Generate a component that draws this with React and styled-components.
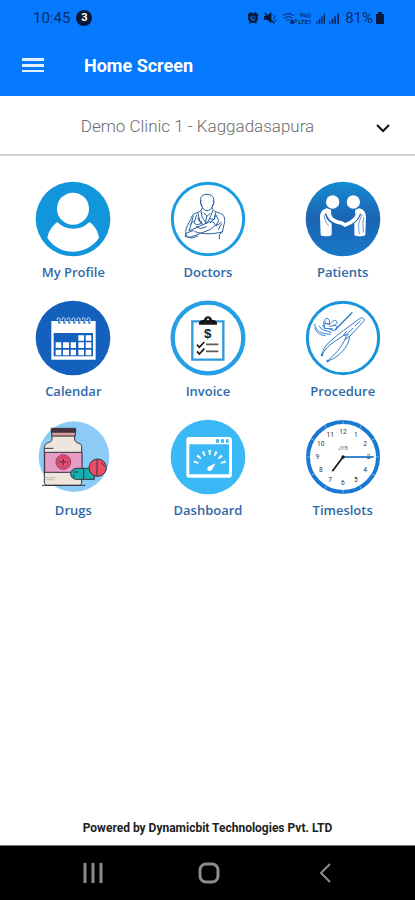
import React, { useState } from "react";
import styled, { createGlobalStyle } from "styled-components";

const GlobalStyle = createGlobalStyle`
  * {
    box-sizing: border-box;
  }
  body {
    margin: 0;
    background: #ffffff;
    font-family: Roboto, "Liberation Sans", sans-serif;
  }
`;

const Screen = styled.div`
  display: flex;
  flex-direction: column;
  min-height: 100vh;
`;

const Header = styled.header`
  background: #057afe;
  color: #ffffff;
`;

const StatusBar = styled.div`
  display: flex;
  align-items: center;
  height: 35px;
  padding: 0 31px 0 33px;
  color: #052c66;
  font-size: 15px;
`;

const Badge = styled.span`
  display: flex;
  align-items: center;
  justify-content: center;
  width: 16px;
  height: 16px;
  margin-left: 6px;
  border-radius: 50%;
  background: #07183a;
  color: #ffffff;
  font-size: 11px;
  font-weight: 700;
`;

const StatusIcons = styled.div`
  display: flex;
  align-items: center;
  gap: 3px;
  margin-left: auto;
`;

const TitleBar = styled.div`
  display: flex;
  align-items: center;
  height: 61px;
  padding: 0 20px;
`;

const MenuButton = styled.button`
  display: flex;
  padding: 0;
  border: 0;
  background: none;
  color: inherit;
  cursor: pointer;
`;

const Title = styled.h1`
  margin: 0 0 0 39px;
  font-size: 18px;
  font-weight: 700;
  line-height: 24px;
`;

const ClinicPicker = styled.div`
  display: grid;
  align-items: center;
  height: 60px;
  border-bottom: 2px solid #d2d2d2;

  > * {
    grid-area: 1 / 1;
  }
  svg {
    justify-self: end;
    margin: 6px 25px 0 0;
    pointer-events: none;
  }
`;

const ClinicSelect = styled.select`
  width: 100%;
  height: 100%;
  padding: 2px 36px 0 16px;
  border: 0;
  appearance: none;
  background: none;
  color: #6c6c6c;
  font-family: inherit;
  font-size: 17px;
  font-weight: 300;
  text-align: center;
  text-align-last: center;
`;

const Menu = styled.nav`
  display: grid;
  grid-template-columns: repeat(3, 1fr);
  row-gap: 19px;
  padding: 25px 5px 0 6px;
`;

const Tile = styled.a`
  display: flex;
  flex-direction: column;
  align-items: center;
  gap: 6px;
  color: #2f69a8;
  font-family: "Open Sans", "Noto Sans", sans-serif;
  font-size: 13px;
  font-weight: 600;
  line-height: 18px;
  text-decoration: none;
`;

const Footer = styled.footer`
  margin-top: auto;
  padding-bottom: 8px;
  color: #222222;
  font-size: 12px;
  font-weight: 700;
  line-height: 18px;
  text-align: center;
`;

const SystemNav = styled.div`
  display: grid;
  grid-template-columns: repeat(3, 1fr);
  align-items: center;
  height: 55px;
  padding: 0 32px 0 35px;
  background: #000000;
  border-top: 1px solid #777777;
`;

const SystemButton = styled.button`
  display: flex;
  justify-content: center;
  padding: 0;
  border: 0;
  background: none;
  color: #8c8c8c;
  cursor: pointer;
`;

const SignalIcons = () => (
  <svg width="95" height="14" viewBox="120 30 285 42" fill="#06275c" aria-hidden="true">
    <g fill="#07183a">
      <circle cx="138" cy="51" r="15" />
      <path d="M121 42l10-9 5 4-11 9zM155 42l-10-9-5 4 11 9zM127 61l6 4-5 4zM149 61l-6 4 5 4z" />
      <path d="M171 44h9l13-11v34l-13-11h-9z" />
    </g>
    <circle cx="138" cy="51" r="8" fill="#0a62c9" />
    <path d="M138 43v9h7" stroke="#07183a" strokeWidth="4" fill="none" />
    <path d="M173 35l29 32" stroke="#07183a" strokeWidth="4" />
    <path
      d="M199 42l6 5-5 5 6 6-5 7M227 44q17-12 34 0M232 51q12-9 24 0M238 58q6-5 12 0"
      stroke="#06275c"
      strokeWidth="3"
      fill="none"
    />
    <path d="M250 60l6-5 6 5v8h-12zM263 55h7l-3 12z" />
    <text x="278" y="48" fontSize="18" fontFamily="Roboto, sans-serif" fontWeight="700">Vo))</text>
    <text x="274" y="68" fontSize="18" fontFamily="Roboto, sans-serif" fontWeight="700">LTE1</text>
    <path d="M328 61h4v7h-4zM335 54h5v14h-5zM343 46h4v22h-4zM350 38h4v30h-4z" />
    <path d="M366 61h4v7h-4zM374 54h5v14h-5zM382 46h5v22h-5zM391 38h5v30h-5z" />
  </svg>
);

const BatteryIcon = () => (
  <svg width="8" height="12" viewBox="0 0 8 12" aria-hidden="true">
    <path d="M2 0h4v2h2v10H0V2h2z" fill="#07183a" />
  </svg>
);

const HamburgerIcon = () => (
  <svg width="25" height="18" viewBox="0 0 25 18" fill="#e6f1ff" aria-hidden="true">
    <path d="M2 1h22v3H2zM2 7h22v3H2zM2 13h22v2H2z" />
  </svg>
);

const ChevronIcon = () => (
  <svg width="14" height="10" viewBox="0 0 14 10" aria-hidden="true">
    <path d="M1 2l6 6 6-6" fill="none" stroke="#111111" strokeWidth="2" />
  </svg>
);

const ProfileIcon = () => (
  <svg width="76" height="76" viewBox="31 32 228 228" aria-hidden="true">
    <circle cx="145" cy="146" r="112" fill="#1296db" />
    <path d="M98 155c-16 12-26 27-30 48 20 29 47 41 77 41s58-14 78-41c-3-20-12-36-29-48-12 13-29 20-48 20s-36-7-48-20z" fill="#fff" />
    <circle cx="145" cy="115" r="48" fill="#fff" />
  </svg>
);

const DoctorIcon = () => (
  <svg width="76" height="76" viewBox="31 32 228 228" fill="none" aria-hidden="true">
    <circle cx="145" cy="146" r="107" stroke="#1b9ce0" strokeWidth="9" />
    <g stroke="#2c5f9f" strokeWidth="3" strokeLinejoin="round" strokeLinecap="round">
      <path d="M126 106c-8-19-4-34 16-34s25 16 17 35c-4 10-10 14-17 14s-13-5-16-15zM125 92c-5 0-3 12 2 14M160 92c5 0 3 12-2 14" />
      <path d="M128 112c-2 8-5 10-13 14-14 4-19 9-22 22-7 12-14 24-15 35-2 12 9 19 20 20l16-6M157 112c2 8 6 11 16 14 16 4 23 10 22 28l-7 31-9 8v13" />
      <path d="M101 137l-7 26-6 18 13-5 51-23 10 3 5 8-12 12-45 18-22 8-12-4 4-10 21-7" />
      <path d="M124 122l4 20 13 18 10-18 8-20M115 128l4 21 11 14M168 127l-4 17-12 13M133 128l9 10 9-9M141 139l-4 21" />
      <path d="M111 135l-8 23 8 5 14-3-10-17M169 134l8 17-9 16 17-10M119 145c-4 5 1 13 7 8M151 145l13 3 3-12" />
      <path d="M106 184c27 9 50 8 82 1M110 168l12 7 18-6M176 177l9-15M91 163l11-11" />
    </g>
  </svg>
);

const PatientsIcon = () => (
  <svg width="76" height="76" viewBox="35 32 228 228" aria-hidden="true">
    <defs>
      <linearGradient id="patients" x1="0" y1="0" x2="0" y2="1">
        <stop offset="0" stopColor="#168bd2" />
        <stop offset="0.5" stopColor="#1c64b4" />
        <stop offset="1" stopColor="#1679c8" />
      </linearGradient>
    </defs>
    <circle cx="149" cy="146" r="112" fill="url(#patients)" />
    <g fill="#fff">
      <circle cx="118" cy="95" r="20" />
      <circle cx="180" cy="95" r="20" />
      <path d="M101 114c-15 3-21 13-21 28l2 51c2 6 31 6 33 0v-37l-2-38zM197 114c15 3 21 13 21 28l-2 51c-3 6-30 6-33 0v-37l3-38z" />
    </g>
    <path d="M101 128c5 19 20 30 42 33l12 2c18-5 34-14 42-35" fill="none" stroke="#1c64b4" strokeWidth="15" />
    <path d="M102 121c4 22 20 34 43 37l10 6c21-6 37-20 42-43" fill="none" stroke="#fff" strokeWidth="11" strokeLinecap="round" />
    <path d="M92 135c3 17 8 26 15 31M207 132c-10 22-14 29-9 59M212 140c-7 18 0 31-3 47" fill="none" stroke="#1c64b4" strokeWidth="2" />
  </svg>
);

const CalendarIcon = () => (
  <svg width="76" height="76" viewBox="31 28 228 228" aria-hidden="true">
    <circle cx="145" cy="142" r="112" fill="#1460bd" />
    <path d="M80 91h133v116H80z" fill="#fff" />
    <path d="M87 127h118v70H87z" fill="#1460bd" />
    <g fill="#fff">
      <path d="M93 155h17v17H93zM115 155h18v17h-18zM138 155h16v17h-16zM161 155h17v17h-17zM183 155h17v17h-17z" />
      <path d="M93 177h17v17H93zM115 177h18v17h-18zM138 177h16v17h-16zM161 177h17v17h-17zM183 177h17v17h-17z" />
      <path d="M161 134h17v16h-17zM183 134h17v16h-17z" />
    </g>
    {[100, 115, 130, 145, 160, 175, 190].map((x) => (
      <g key={x} fill="none">
        <path d={`M${x + 4} 90v9`} stroke="#1460bd" strokeWidth="6" />
        <path d={`M${x - 2} 88c-3-9 9-9 8-1v9`} stroke="#dbe9f8" strokeWidth="3" />
      </g>
    ))}
  </svg>
);

const InvoiceIcon = () => (
  <svg width="76" height="76" viewBox="31 28 228 228" fill="none" aria-hidden="true">
    <circle cx="145" cy="142" r="106" stroke="#279fe7" strokeWidth="13" />
    <path d="M98 92h93v115H98z" stroke="#3399df" strokeWidth="7" />
    <path d="M118 102v-6c2-7 8-9 15-9 2-14 22-14 24 0 8 0 13 3 15 9v6z" fill="#151515" />
    <circle cx="145" cy="86" r="3" fill="#fff" />
    <text x="144" y="143" textAnchor="middle" fontFamily="'Liberation Sans', sans-serif" fontWeight="700" fontSize="40" fill="#151515">$</text>
    <path d="M112 162l7 8 15-16M112 182l7 8 15-16" stroke="#151515" strokeWidth="5" />
    <path d="M139 161h37M139 182h37" stroke="#5b5b5b" strokeWidth="5" />
  </svg>
);

const ProcedureIcon = () => (
  <svg width="76" height="76" viewBox="35 28 228 228" fill="none" aria-hidden="true">
    <circle cx="149" cy="142" r="107" stroke="#1994db" strokeWidth="9" />
    <g stroke="#2e7bc9" strokeWidth="3" strokeLinejoin="round" strokeLinecap="round">
      <path d="M86 193c2-15 9-27 22-39 13-13 29-23 43-35l48-35c8-6 17 0 12 8l-42 45c-2 19-9 31-21 44-12 14-27 25-45 30" />
      <path d="M86 193c7-14 15-23 27-33l38-26c7-3 9 2 6 8-7 14-14 27-24 39l-30 30" />
      <path d="M159 122l-8 11M168 137l-12 9M170 121l-10 9M178 113l-7 8M151 134l14-2M186 105l15-14" />
      <path d="M176 66l-49 50" strokeWidth="4" />
      <path d="M107 101c-16-1-15-18-7-18 8 1 10 9 8 18zM104 99c-18-4-18 12-8 14l23 2M109 101c7-11 18-16 22-8 2 8-8 12-22 14M119 105c17-5 15 14 1 15l-12-5" />
      <path d="M64 101c4 20 18 29 47 30M64 112c4 12 15 21 31 23M77 107l11 10 25 8M91 93l3 21" />
    </g>
    <g fill="#2e7bc9">
      <circle cx="86" cy="193" r="4" />
      <circle cx="103" cy="211" r="4" />
    </g>
  </svg>
);

const DrugsIcon = () => (
  <svg width="76" height="76" viewBox="31 25 228 228" stroke="#39313b" strokeWidth="3" aria-hidden="true">
    <circle cx="148" cy="138" r="106" fill="#8ccbf5" stroke="none" />
    <path d="M82 75h68v13c3 7 10 9 18 13 3 3 3 5 3 11v102c0 7-3 10-9 10H67c-5-1-8-4-8-10V110c0-8 9-14 19-17 3-2 4-5 4-8z" fill="#eee6dc" />
    <path d="M81 64h71v12H81z" fill="#dca09b" />
    <path d="M80 53h73v11H80z" fill="#4b3038" />
    <path d="M60 125h112v60H60z" fill="#e69bc9" />
    <path d="M61 113h25" />
    <path d="M60 201h36M64 207h25" stroke="#b5a9a5" strokeWidth="2" />
    <circle cx="116" cy="154" r="22" fill="#e75275" stroke="#9b3659" />
    <circle cx="116" cy="154" r="15" fill="none" stroke="#9b3659" strokeWidth="2" />
    <path d="M116 144v20M106 154h20" stroke="#792e48" strokeWidth="4" />
    <path d="M52 224h130" />
    <path d="M155 173h54v33h-54c-9 0-17-7-17-16s8-17 17-17z" fill="#16aeb3" />
    <path d="M146 184h14M147 192v8M177 174v31" />
    <circle cx="219" cy="171" r="26" fill="#ed4c67" />
    <path d="M217 145v52M230 155l10 13" />
  </svg>
);

const DashboardIcon = () => (
  <svg width="76" height="76" viewBox="31 25 228 228" aria-hidden="true">
    <circle cx="145" cy="139" r="112" fill="#3bb8f6" />
    <rect x="80" y="79" width="137" height="122" rx="9" fill="#fff" />
    <path d="M89 101h119v90H89z" fill="#3bb8f6" />
    <path d="M169 86h9v10h-9zM184 86h9v10h-9zM199 86h8v10h-8z" fill="#3bb8f6" />
    {[-72, -48, -24, 0, 24, 48, 72].map((angle) => (
      <path key={angle} d="M146 118h8l-2 15h-4z" fill="#fff" transform={`rotate(${angle} 150 168)`} />
    ))}
    <path d="M168 158l-11 19c-4 6-13 4-14-1-1-4 2-7 6-9z" fill="#fff" />
  </svg>
);

const HOURS = [12, 1, 2, 3, 4, 5, 6, 7, 8, 9, 10, 11];

const ClockIcon = () => (
  <svg width="76" height="76" viewBox="35 25 228 228" fill="none" aria-hidden="true">
    <circle cx="149" cy="139" r="105" stroke="#1878d2" strokeWidth="12" />
    {HOURS.map((hour) => (
      <path key={hour} d="M149 29v11" stroke="#a9d0ef" strokeWidth="2" transform={`rotate(${hour * 30} 149 139)`} />
    ))}
    <g fill="#343434" fontFamily="Roboto, sans-serif" fontSize="20" fontWeight="400" textAnchor="middle">
      {HOURS.map((hour) => (
        <text
          key={hour}
          x={149 + Math.sin((hour * Math.PI) / 6) * 77}
          y={146 - Math.cos((hour * Math.PI) / 6) * 77}
        >
          {hour}
        </text>
      ))}
      <text x="149" y="119" fontSize="17" fill="#777777">JYB</text>
    </g>
    <path d="M149 139l-32 43" stroke="#151515" strokeWidth="5" />
    <path d="M149 139h92" stroke="#176bc2" strokeWidth="5" />
    <circle cx="149" cy="139" r="5" fill="#151515" />
  </svg>
);

const tiles = [
  { label: "My Profile", icon: ProfileIcon },
  { label: "Doctors", icon: DoctorIcon },
  { label: "Patients", icon: PatientsIcon },
  { label: "Calendar", icon: CalendarIcon },
  { label: "Invoice", icon: InvoiceIcon },
  { label: "Procedure", icon: ProcedureIcon },
  { label: "Drugs", icon: DrugsIcon },
  { label: "Dashboard", icon: DashboardIcon },
  { label: "Timeslots", icon: ClockIcon },
];

const clinics = ["Demo Clinic 1 - Kaggadasapura"];

const App = () => {
  const [clinic, setClinic] = useState(clinics[0]);

  return (
    <>
      <GlobalStyle />
      <Screen>
        <Header>
          <StatusBar>
            <span>10:45</span>
            <Badge>3</Badge>
            <StatusIcons>
              <SignalIcons />
              <span>81%</span>
              <BatteryIcon />
            </StatusIcons>
          </StatusBar>
          <TitleBar>
            <MenuButton type="button" aria-label="Menu">
              <HamburgerIcon />
            </MenuButton>
            <Title>Home Screen</Title>
          </TitleBar>
        </Header>
        <ClinicPicker>
          <ClinicSelect
            aria-label="Clinic"
            value={clinic}
            onChange={(e) => setClinic(e.target.value)}
          >
            {clinics.map((name) => (
              <option key={name}>{name}</option>
            ))}
          </ClinicSelect>
          <ChevronIcon />
        </ClinicPicker>
        <Menu>
          {tiles.map(({ label, icon: Icon }) => (
            <Tile key={label} href={`#${label}`}>
              <Icon />
              {label}
            </Tile>
          ))}
        </Menu>
        <Footer>Powered by Dynamicbit Technologies Pvt. LTD</Footer>
        <SystemNav>
          <SystemButton type="button" aria-label="Recent apps">
            <svg width="20" height="20" viewBox="0 0 20 20" aria-hidden="true">
              <path d="M2 0v20M10 0v20M18 0v20" stroke="currentColor" strokeWidth="3" />
            </svg>
          </SystemButton>
          <SystemButton type="button" aria-label="Home">
            <svg width="22" height="22" viewBox="0 0 22 22" aria-hidden="true">
              <rect x="2" y="2" width="18" height="18" rx="6" fill="none" stroke="currentColor" strokeWidth="3" />
            </svg>
          </SystemButton>
          <SystemButton type="button" aria-label="Back">
            <svg width="12" height="20" viewBox="0 0 12 20" aria-hidden="true">
              <path d="M11 1L2 10l9 9" fill="none" stroke="currentColor" strokeWidth="2" />
            </svg>
          </SystemButton>
        </SystemNav>
      </Screen>
    </>
  );
};

export default App;
